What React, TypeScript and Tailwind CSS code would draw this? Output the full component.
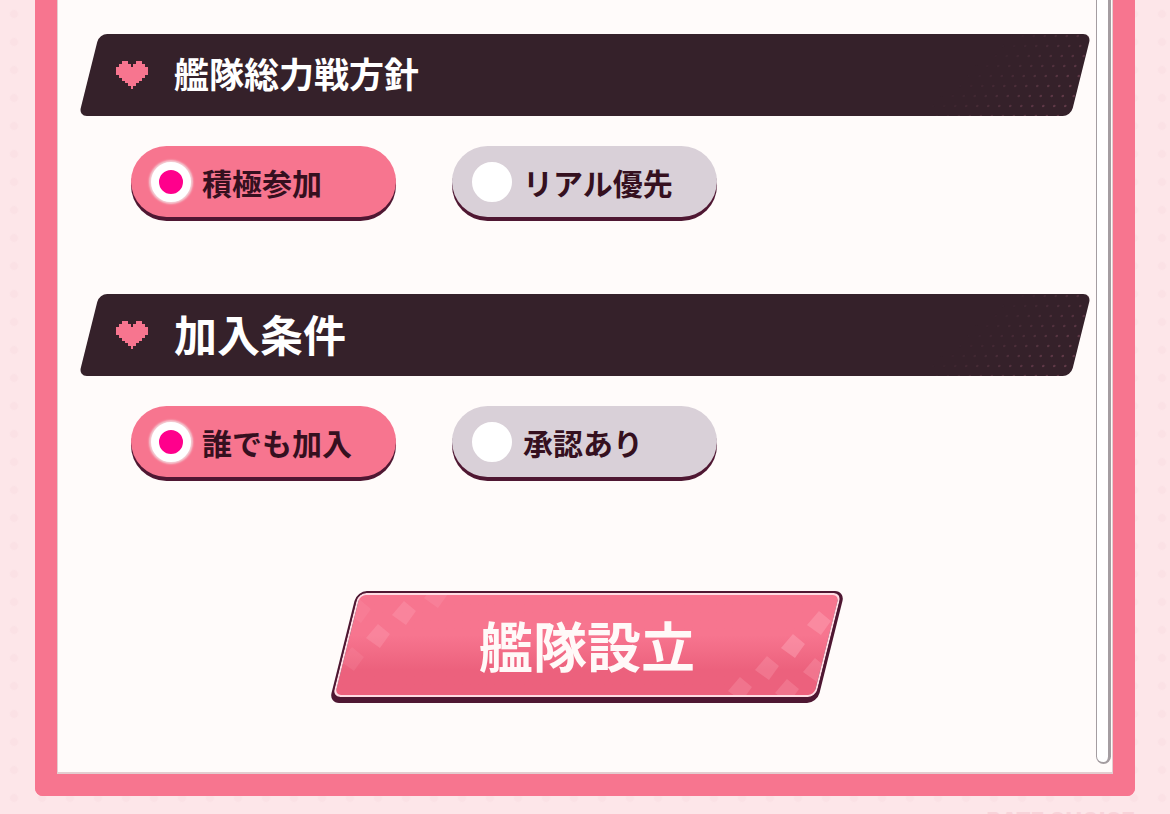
import React from "react";

type Option = {
  value: string;
  label: string;
};

interface ISectionProps {
  title: string;
  titleClass: string;
  name: string;
  options: Option[];
}

const heartRows = [
  "..##...##..",
  ".####.####.",
  "###########",
  "###########",
  "###########",
  ".#########.",
  "..#######..",
  "...#####...",
  "....###....",
  ".....#.....",
];

// x, y, opacity of the diamonds on the submit button
const diamonds = [
  [32, 18, 0.25],
  [6, 41, 0.25],
  [-20, 64, 0.14],
  [64, 1, 0.18],
  [-13, 16, 0.12],
  [447, 28, 0.34],
  [421, 51, 0.38],
  [395, 73, 0.26],
  [368, 94, 0.24],
  [443, 75, 0.26],
  [415, 96, 0.24],
];

function Heart() {
  return (
    <svg
      viewBox="0 0 11 10"
      className="h-7 w-8 shrink-0"
      preserveAspectRatio="none"
      shapeRendering="crispEdges"
      aria-hidden="true"
    >
      {heartRows.map((row, y) =>
        row
          .split("")
          .map((cell, x) =>
            cell === "#" ? (
              <rect
                key={`${x}-${y}`}
                x={x}
                y={y}
                width="1"
                height="1"
                fill="#f7758f"
              />
            ) : null
          )
      )}
    </svg>
  );
}

function BannerDots() {
  const dots: { x: number; y: number; opacity: number }[] = [];

  for (let row = 0; row < 9; row++) {
    for (let col = 0; col < 15; col++) {
      const x = col * 11 + (row % 2) * 5 + 4;
      const y = row * 10 + 2;
      const strength = (x + y * 0.9 - 80) / 120;
      if (strength > 0) {
        dots.push({ x, y, opacity: Math.min(strength, 1) * 0.6 });
      }
    }
  }

  return (
    <svg
      viewBox="0 0 160 82"
      className="absolute right-0 top-0 h-full w-40"
      aria-hidden="true"
    >
      {dots.map(({ x, y, opacity }) => (
        <circle
          key={`${x}-${y}`}
          cx={x}
          cy={y}
          r="1.3"
          fill="#7d4a5c"
          opacity={opacity}
        />
      ))}
    </svg>
  );
}

function Banner({ title, titleClass }: { title: string; titleClass: string }) {
  return (
    <div className="relative isolate flex h-[82px] items-center gap-[26px] pl-9">
      <div className="absolute inset-y-0 left-[9px] right-[9px] -z-10 -skew-x-[14deg] overflow-hidden rounded-lg bg-[#35212a]">
        <BannerDots />
      </div>
      <Heart />
      <h2 className={titleClass}>{title}</h2>
    </div>
  );
}

function Section({ title, titleClass, name, options }: ISectionProps) {
  const [selected, setSelected] = React.useState(options[0].value);

  return (
    <section>
      <Banner title={title} titleClass={titleClass} />
      <div
        role="radiogroup"
        aria-label={title}
        className="mt-[30px] flex flex-wrap gap-14 pl-[51px]"
      >
        {options.map(({ value, label }) => (
          <label
            key={value}
            className="mb-1 flex h-[71px] w-[265px] cursor-pointer items-center gap-[11px] rounded-full bg-[#d9d0d8] pl-5 shadow-[0_4px_0_#4f1732] has-[:checked]:bg-[#f7758f]"
          >
            <input
              type="radio"
              name={name}
              value={value}
              checked={selected === value}
              onChange={() => setSelected(value)}
              className="size-10 shrink-0 appearance-none rounded-full border-8 border-white bg-white checked:bg-[#ff008c] checked:shadow-[0_0_2px_2px_#f3cdd4]"
            />
            <span className="text-[30px] font-semibold leading-10 text-[#35101f]">
              {label}
            </span>
          </label>
        ))}
      </div>
    </section>
  );
}

function SubmitButton() {
  return (
    <button
      type="submit"
      className="relative isolate mx-auto flex h-[112px] w-[512px] cursor-pointer items-center justify-center pb-1"
    >
      <span className="absolute inset-y-0 left-3 right-3 -z-10 -skew-x-[14deg] overflow-hidden rounded-[10px] border-2 border-b-[6px] border-r-[3px] border-[#4f1732] bg-[#4f1732]">
        <span className="block h-full overflow-hidden rounded-[8px] border-2 border-[#ffdbe3] bg-linear-to-b from-[#f7758f] from-40% to-[#ec617d] to-75%">
          <svg
            viewBox="0 0 480 100"
            className="h-full w-full"
            preserveAspectRatio="xMaxYMid slice"
            aria-hidden="true"
          >
            <g fill="#ffb3c2" transform="translate(12 0) skewX(14)">
              {diamonds.map(([x, y, opacity]) => (
                <path
                  key={`${x}-${y}`}
                  d="M1-12l12 10-10 14-14-10z"
                  transform={`translate(${x} ${y})`}
                  opacity={opacity}
                />
              ))}
            </g>
          </svg>
        </span>
      </span>
      <span className="text-[54px] font-bold leading-[60px] text-[#fff9f8]">
        艦隊設立
      </span>
    </button>
  );
}

export default function App() {
  return (
    <div className="overflow-hidden bg-[#fde6e9] bg-[radial-gradient(#fbe1e5_3px,transparent_5px)] bg-[size:28px_28px] px-[35px] font-['Noto_Sans_CJK_JP',sans-serif]">
      <main className="rounded-b-lg border-x-[22px] border-b-[22px] border-[#f7758f]">
        <div className="flex border-x border-b-2 border-[#e3cdd0] bg-[#fffbfa]">
          <form
            className="flex grow flex-col pb-[69px] pl-[22px] pr-[6px] pt-[34px]"
            onSubmit={(event) => event.preventDefault()}
          >
            <Section
              title="艦隊総力戦方針"
              titleClass="pb-1 text-[35px] font-bold leading-[50px] text-white"
              name="policy"
              options={[
                { value: "active", label: "積極参加" },
                { value: "real-life", label: "リアル優先" },
              ]}
            />
            <div className="mt-[73px]">
              <Section
                title="加入条件"
                titleClass="pb-1 text-[43px] font-bold leading-[50px] text-white"
                name="requirement"
                options={[
                  { value: "anyone", label: "誰でも加入" },
                  { value: "approval", label: "承認あり" },
                ]}
              />
            </div>
            <div className="mt-[110px] pl-1">
              <SubmitButton />
            </div>
          </form>
          <div className="mb-2 mr-px w-[15px] shrink-0 rounded-b-lg border-b-2 border-l border-r-[3px] border-[#a49da1] bg-white" />
        </div>
      </main>
      <footer className="flex h-[18px] justify-end overflow-hidden pt-3">
        <p className="font-['Inter',sans-serif] text-[22px] font-extrabold leading-6 text-[#f8d3d9]">
          RATE CHOICE
        </p>
      </footer>
    </div>
  );
}
